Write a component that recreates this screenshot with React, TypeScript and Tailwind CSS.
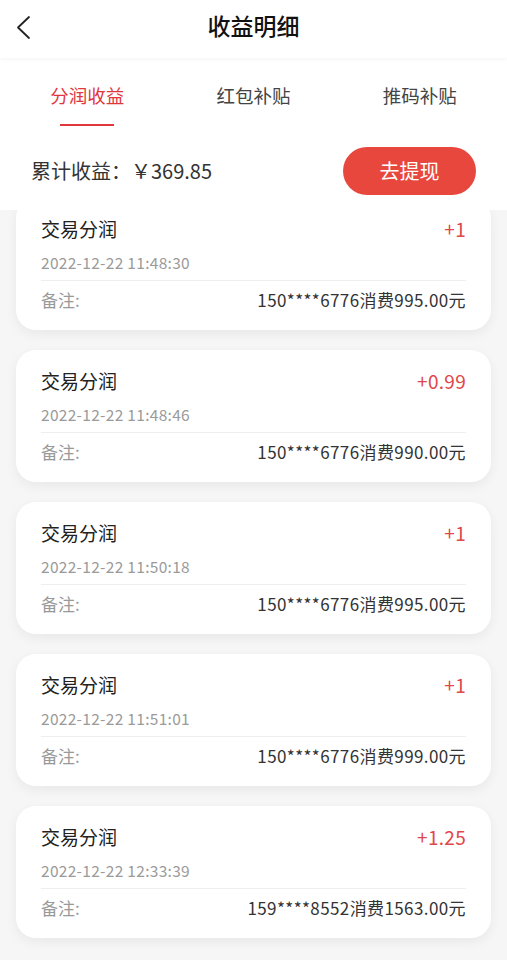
import React from "react";

const records = [
  { amount: "+1", time: "2022-12-22 11:48:30", remark: "150****6776消费995.00元" },
  { amount: "+0.99", time: "2022-12-22 11:48:46", remark: "150****6776消费990.00元" },
  { amount: "+1", time: "2022-12-22 11:50:18", remark: "150****6776消费995.00元" },
  { amount: "+1", time: "2022-12-22 11:51:01", remark: "150****6776消费999.00元" },
  { amount: "+1.25", time: "2022-12-22 12:33:39", remark: "159****8552消费1563.00元" },
];

export default function App() {
  return (
    <div
      className="min-h-screen w-full bg-[#f6f6f6] overflow-hidden"
      style={{ fontFamily: '"Noto Sans CJK SC", "Noto Sans", sans-serif' }}
    >
      <div className="relative z-10 bg-white">
        <div className="relative h-[58px] flex items-center justify-center pb-[8px] shadow-[0_2px_3px_rgba(0,0,0,0.035)]">
          <svg className="absolute left-[14px] top-[15px]" width="20" height="26" viewBox="0 0 20 26">
            <path d="M15 2 L4 12.5 L15 23" fill="none" stroke="#222" strokeWidth="1.8" strokeLinecap="round" strokeLinejoin="round" />
          </svg>
          <span className="text-[23px] font-medium text-[#111] leading-none">收益明细</span>
        </div>
        <div className="grid grid-cols-3 pt-[24px] px-[4px]">
          <div className="flex flex-col items-center">
            <span className="text-[18.5px] leading-[26px] text-[#e0373d]">分润收益</span>
            <div className="mt-[16px] h-[2px] w-[54px] bg-[#e0373d]" />
          </div>
          <div className="flex flex-col items-center">
            <span className="text-[18.5px] leading-[26px] text-[#444]">红包补贴</span>
          </div>
          <div className="flex flex-col items-center">
            <span className="text-[18.5px] leading-[26px] text-[#444]">推码补贴</span>
          </div>
        </div>
        <div className="flex items-center justify-between pl-[31px] pr-[31px] pt-[21px] pb-[15px]">
          <span className="text-[20px] text-[#333]">累计收益：￥369.85</span>
          <button className="w-[133px] h-[48px] rounded-full bg-[#e8473e] text-white text-[20px]">去提现</button>
        </div>
      </div>
      <div className="-mt-[12px] flex flex-col gap-[20px] px-[16px] pb-[20px]">
        {records.map((r, i) => (
          <div
            key={i}
            className="bg-white rounded-[20px] shadow-[0_4px_12px_rgba(0,0,0,0.06)] pt-[19px] pb-[18px] px-[25px]"
          >
            <div className="flex items-center justify-between h-[24px]">
              <span className="text-[19px] text-[#222] leading-[24px]">交易分润</span>
              <span className="text-[19px] text-[#e0474a] leading-[24px] tracking-[0.3px]">{r.amount}</span>
            </div>
            <div className="mt-[11px] h-[20px] leading-[20px] text-[15.5px] tracking-[0.3px] text-[#9a9a9a]">{r.time}</div>
            <div className="mt-[8px] h-px bg-[#eeeeee]" />
            <div className="mt-[7px] flex items-center justify-between h-[24px]">
              <span className="text-[17px] text-[#999] leading-[24px]">备注:</span>
              <span className="text-[17px] text-[#333] leading-[24px] tracking-[0.4px]">{r.remark}</span>
            </div>
          </div>
        ))}
      </div>
    </div>
  );
}
